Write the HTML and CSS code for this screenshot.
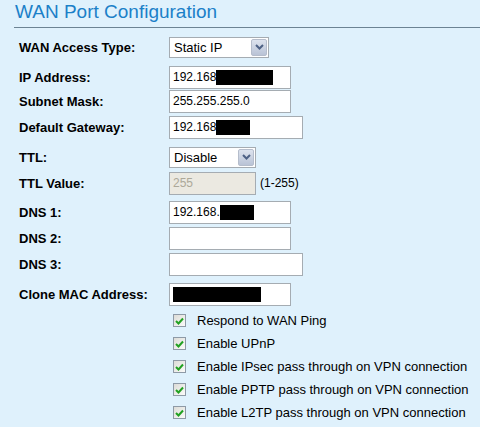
FILE: index.html
```html
<!DOCTYPE html>
<html lang="en">
<head>
    <meta charset="UTF-8">
    <meta name="viewport" content="width=device-width, initial-scale=1.0">
    <title>WAN Port Configuration</title>
    <link rel="stylesheet" href="styles.css">
</head>
<body>
    <h1 class="title">WAN Port Configuration</h1>
    <div class="rule"></div>

    <form class="wanForm">
        <div class="row r1">
            <label class="lbl">WAN Access Type:</label>
            <div class="select w100"><span class="selText">Static IP</span><span class="selBtn"><svg width="9" height="6" viewBox="0 0 9 6"><path d="M1 1 L4.5 4.5 L8 1" fill="none" stroke="#4d6185" stroke-width="2"/></svg></span></div>
        </div>
        <div class="row r2">
            <label class="lbl">IP Address:</label>
            <div class="field w122">192.168<span class="mask m57"></span></div>
        </div>
        <div class="row r3">
            <label class="lbl">Subnet Mask:</label>
            <div class="field w122">255.255.255.0</div>
        </div>
        <div class="row r4">
            <label class="lbl">Default Gateway:</label>
            <div class="field w134">192.168<span class="mask m34"></span></div>
        </div>
        <div class="row r5">
            <label class="lbl">TTL:</label>
            <div class="select w87"><span class="selText">Disable</span><span class="selBtn"><svg width="9" height="6" viewBox="0 0 9 6"><path d="M1 1 L4.5 4.5 L8 1" fill="none" stroke="#4d6185" stroke-width="2"/></svg></span></div>
        </div>
        <div class="row r6">
            <label class="lbl">TTL Value:</label>
            <div class="field w87 disabled">255</div>
            <span class="hint">(1-255)</span>
        </div>
        <div class="row r7">
            <label class="lbl">DNS 1:</label>
            <div class="field w122">192.168.<span class="mask m34"></span></div>
        </div>
        <div class="row r8">
            <label class="lbl">DNS 2:</label>
            <div class="field w122"></div>
        </div>
        <div class="row r9">
            <label class="lbl">DNS 3:</label>
            <div class="field w134"></div>
        </div>
        <div class="row r10">
            <label class="lbl">Clone MAC Address:</label>
            <div class="field w122"><span class="mask m88"></span></div>
        </div>

        <div class="checks">
            <div class="check"><span class="box"><svg width="9" height="8" viewBox="0 0 9 8"><path d="M1 4 L3.5 6.5 L8 1.5" fill="none" stroke="#21a121" stroke-width="2"/></svg></span>Respond to WAN Ping</div>
            <div class="check"><span class="box"><svg width="9" height="8" viewBox="0 0 9 8"><path d="M1 4 L3.5 6.5 L8 1.5" fill="none" stroke="#21a121" stroke-width="2"/></svg></span>Enable UPnP</div>
            <div class="check"><span class="box"><svg width="9" height="8" viewBox="0 0 9 8"><path d="M1 4 L3.5 6.5 L8 1.5" fill="none" stroke="#21a121" stroke-width="2"/></svg></span>Enable IPsec pass through on VPN connection</div>
            <div class="check"><span class="box"><svg width="9" height="8" viewBox="0 0 9 8"><path d="M1 4 L3.5 6.5 L8 1.5" fill="none" stroke="#21a121" stroke-width="2"/></svg></span>Enable PPTP pass through on VPN connection</div>
            <div class="check"><span class="box"><svg width="9" height="8" viewBox="0 0 9 8"><path d="M1 4 L3.5 6.5 L8 1.5" fill="none" stroke="#21a121" stroke-width="2"/></svg></span>Enable L2TP pass through on VPN connection</div>
        </div>
    </form>
</body>
</html>
```

FILE: styles.css
```css
body {
    margin: 0;
    padding: 0;
    background-color: #dff1fc;
    font-family: "Liberation Sans", Arial, sans-serif;
    color: #000;
    overflow: hidden;
}
.title {
    margin: 0;
    padding: 1px 0 0 15px;
    font-size: 19px;
    font-weight: normal;
    line-height: 22px;
    color: #1b80c8;
}
.rule {
    margin: 4px 0 0 14px;
    height: 1px;
    background-color: #6c8393;
}
.wanForm {
    padding-left: 19px;
}
.row {
    display: flex;
    align-items: center;
    height: 24px;
}
.r1 { margin-top: 7px; }
.r2 { margin-top: 6px; }
.r3 { margin-top: 0; }
.r4 { margin-top: 2px; }
.r5 { margin-top: 6px; }
.r6 { margin-top: 2px; }
.r7 { margin-top: 5px; }
.r8 { margin-top: 2px; }
.r9 { margin-top: 2px; }
.r10 { margin-top: 6px; }
.lbl {
    width: 150px;
    flex-shrink: 0;
    font-size: 13px;
    font-weight: bold;
}
.field {
    box-sizing: border-box;
    height: 23px;
    padding: 0 3px;
    display: flex;
    align-items: center;
    background-color: #fff;
    border: 1px solid #a5acb2;
    font-size: 12px;
}
.disabled {
    background-color: #ebe9e1;
    color: #aca899;
}
.hint {
    margin-left: 4px;
    font-size: 12px;
}
.w87 { width: 87px; }
.w100 { width: 100px; }
.w122 { width: 122px; }
.w134 { width: 134px; }
.mask {
    display: inline-block;
    height: 15px;
    background-color: #000;
}
.m34 { width: 34px; }
.m57 { width: 57px; }
.m88 { width: 88px; }
.select {
    box-sizing: border-box;
    height: 21px;
    display: flex;
    align-items: center;
    justify-content: space-between;
    background-color: #fff;
    border: 1px solid #a5acb2;
    padding: 1px;
    font-size: 13px;
}
.selText {
    padding-left: 3px;
}
.selBtn {
    box-sizing: border-box;
    width: 16px;
    height: 17px;
    display: flex;
    align-items: center;
    justify-content: center;
    background: linear-gradient(#dde3ee, #b9c3d6);
    border: 1px solid #b5bdcc;
    border-radius: 2px;
}
.checks {
    margin-top: 3px;
    padding-left: 154px;
}
.check {
    display: flex;
    align-items: center;
    height: 23px;
    font-size: 13px;
}
.box {
    box-sizing: border-box;
    width: 13px;
    height: 13px;
    margin-right: 11px;
    display: flex;
    align-items: center;
    justify-content: center;
    background: linear-gradient(135deg, #dcdcd7, #fbfbf9);
    border: 1px solid #8e9aa6;
}
```
